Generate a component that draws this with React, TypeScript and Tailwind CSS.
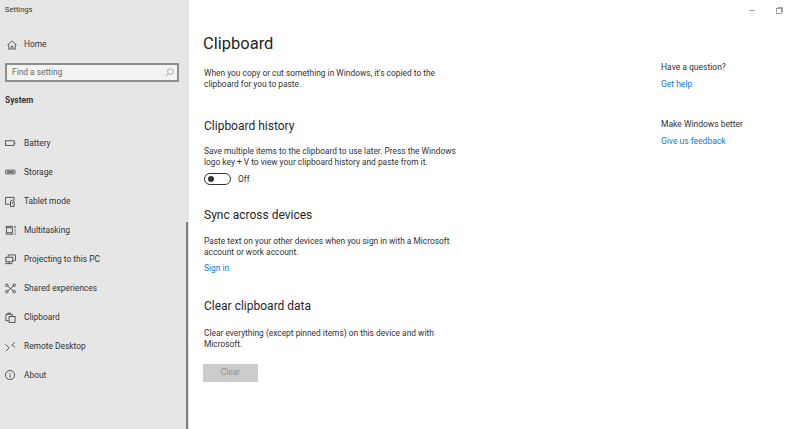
import type { ReactNode } from "react";

function Icon({ children }: { children: ReactNode }) {
  return (
    <svg
      viewBox="0 0 12 12"
      fill="none"
      stroke="#3a3a3a"
      strokeWidth="0.9"
      className="w-[11px] h-[11px] shrink-0"
    >
      {children}
    </svg>
  );
}

const navItems: { label: string; icon: ReactNode }[] = [
  {
    label: "Battery",
    icon: (
      <>
        <rect x="0.5" y="3" width="9.5" height="5" />
        <path d="M10 5.5h1.5" />
      </>
    ),
  },
  {
    label: "Storage",
    icon: (
      <>
        <rect x="0.5" y="3.5" width="10.5" height="4" rx="1" />
        <path d="M2 5.5h7.5" strokeWidth="1.4" />
      </>
    ),
  },
  {
    label: "Tablet mode",
    icon: (
      <>
        <path d="M5 9H0.5V1.5H10V4.5" />
        <path d="M6 5.5V11.5H10V5.5L8 4.5Z" />
        <path d="M8 6.5V8.5" />
      </>
    ),
  },
  {
    label: "Multitasking",
    icon: (
      <>
        <rect x="1.5" y="3" width="6.5" height="5.5" />
        <path d="M0.5 1.5h8.5M0.5 10h8.5M11 1v2.5M11 5v2M11 8.5v2" />
      </>
    ),
  },
  {
    label: "Projecting to this PC",
    icon: (
      <>
        <path d="M3.5 3V1h8v6H9" />
        <rect x="1" y="3.5" width="7.5" height="5" />
        <path d="M0 10.5h8M4.5 8.5v2" />
      </>
    ),
  },
  {
    label: "Shared experiences",
    icon: (
      <>
        <circle cx="2" cy="2.5" r="1.4" />
        <circle cx="10" cy="2.5" r="1.4" />
        <circle cx="2" cy="9.5" r="1.4" />
        <circle cx="10" cy="9.5" r="1.4" />
        <path d="M3 3.5l6 5M9 3.5l-6 5" />
      </>
    ),
  },
  {
    label: "Clipboard",
    icon: (
      <>
        <path d="M4 9.5H1V2.5H8V5" />
        <path d="M3 2.5V1.2h3V2.5" />
        <rect x="4.5" y="5" width="6.5" height="6.5" />
      </>
    ),
  },
  {
    label: "Remote Desktop",
    icon: <path d="M0.5 3.5L4.5 7.5L1 11M7 5L10.5 1.5M8 4.5L11 7" />,
  },
  {
    label: "About",
    icon: (
      <>
        <circle cx="5.5" cy="5.5" r="5" />
        <path d="M5.5 5v3.5M5.5 3v1" />
      </>
    ),
  },
];

function Sidebar() {
  return (
    <aside className="relative w-[189px] h-[429px] shrink-0 bg-[#e6e6e6] pl-[5px] pr-[10px] text-[#333333]">
      <div className="h-[20px] pt-[4px] text-[7.5px] leading-[12px]">Settings</div>
      <div className="mt-[10px] h-[29px] pl-[2px] flex items-center gap-[7px] text-[8.4px]">
        <svg
          viewBox="0 0 12 12"
          fill="none"
          stroke="#3a3a3a"
          strokeWidth="0.9"
          className="w-[10px] h-[10px] shrink-0"
        >
          <path d="M0.5 6L6 1L11.5 6M2 5V11H5V7.5H7V11H10V5" />
        </svg>
        Home
      </div>
      <div className="mt-[4px] h-[19px] w-[174px] border-2 border-[#8e8e8e] bg-[#f3f3f3] flex items-center justify-between pl-[5px] pr-[3px] text-[8.4px] text-[#6b6b6b]">
        Find a setting
        <svg viewBox="0 0 12 12" fill="none" stroke="#777777" strokeWidth="0.8" className="w-[9px] h-[9px]">
          <circle cx="7.2" cy="4.8" r="3.8" />
          <path d="M4.4 7.6L0.8 11.2" />
        </svg>
      </div>
      <div className="mt-[11px] h-[14px] text-[8.4px] leading-[14px] font-bold">System</div>
      <nav className="mt-[22px] flex flex-col">
        {navItems.map((item) => (
          <div key={item.label} className="h-[29px] flex items-center gap-[8px] text-[8.4px]">
            <Icon>{item.icon}</Icon>
            {item.label}
          </div>
        ))}
      </nav>
      <div className="absolute right-[1px] top-[222px] bottom-0 w-[2px] bg-[#7d7d7d]" />
    </aside>
  );
}

function Section({
  title,
  className,
  bodyClassName,
  children,
}: {
  title: string;
  className: string;
  bodyClassName: string;
  children: ReactNode;
}) {
  return (
    <section className={className}>
      <h2 className="h-[18px] text-[12px] leading-[18px] text-[#1f1f1f]">{title}</h2>
      <div className={bodyClassName}>{children}</div>
    </section>
  );
}

export default function App() {
  return (
    <div
      className="flex w-[800px] h-[429px] overflow-hidden bg-white text-[#333333]"
      style={{ fontFamily: 'Roboto, "Open Sans", sans-serif' }}
    >
      <Sidebar />
      <main className="w-[472px] shrink-0 pl-[15px] pt-[32px]">
        <h1 className="-ml-px h-[24px] text-[16.5px] leading-[24px] text-[#1f1f1f]">Clipboard</h1>
        <p className="mt-[12px] text-[8.4px] leading-[11px]">
          When you copy or cut something in Windows, it's copied to the
          <br />
          clipboard for you to paste.
        </p>
        <Section title="Clipboard history" className="mt-[27px]" bodyClassName="mt-[11px]">
          <p className="text-[8.4px] leading-[11px]">
            Save multiple items to the clipboard to use later. Press the Windows
            <br />
            logo key + V to view your clipboard history and paste from it.
          </p>
          <div className="mt-[5px] flex items-center gap-[7px] text-[8.4px]">
            <div className="w-[27px] h-[12px] rounded-full border border-[#333333] flex items-center pl-[3px]">
              <div className="w-[6px] h-[6px] rounded-full bg-[#333333]" />
            </div>
            Off
          </div>
        </Section>
        <Section title="Sync across devices" className="mt-[20px]" bodyClassName="mt-[12px]">
          <p className="text-[8.4px] leading-[11px]">
            Paste text on your other devices when you sign in with a Microsoft
            <br />
            account or work account.
          </p>
          <div className="mt-[5px] text-[8.4px] leading-[11px] text-[#0f78d4]">Sign in</div>
        </Section>
        <Section title="Clear clipboard data" className="mt-[23px]" bodyClassName="mt-[13px]">
          <p className="text-[8.4px] leading-[11px]">
            Clear everything (except pinned items) on this device and with
            <br />
            Microsoft.
          </p>
          <div className="-ml-px mt-[14px] w-[55px] h-[18px] bg-[#cccccc] flex items-center justify-center text-[8.4px] text-[#8f8f8f]">
            Clear
          </div>
        </Section>
      </main>
      <aside className="relative flex-1 pt-[61px] text-[8.5px] leading-[12px]">
        <div>Have a question?</div>
        <div className="mt-[5px] text-[#0f78d4]">Get help</div>
        <div className="mt-[28px]">Make Windows better</div>
        <div className="mt-[5px] text-[#0f78d4]">Give us feedback</div>
        <div className="absolute top-[7px] right-[17px] flex items-center gap-[21px]">
          <div className="w-[6px] h-px bg-[#a0a0a0]" />
          <svg viewBox="0 0 7 7" fill="none" stroke="#8a8a8a" strokeWidth="0.8" className="w-[7px] h-[7px]">
            <rect x="0.5" y="1.5" width="5" height="5" />
            <path d="M2 1.5V0.5H6.5V5H5.5" />
          </svg>
        </div>
      </aside>
    </div>
  );
}
